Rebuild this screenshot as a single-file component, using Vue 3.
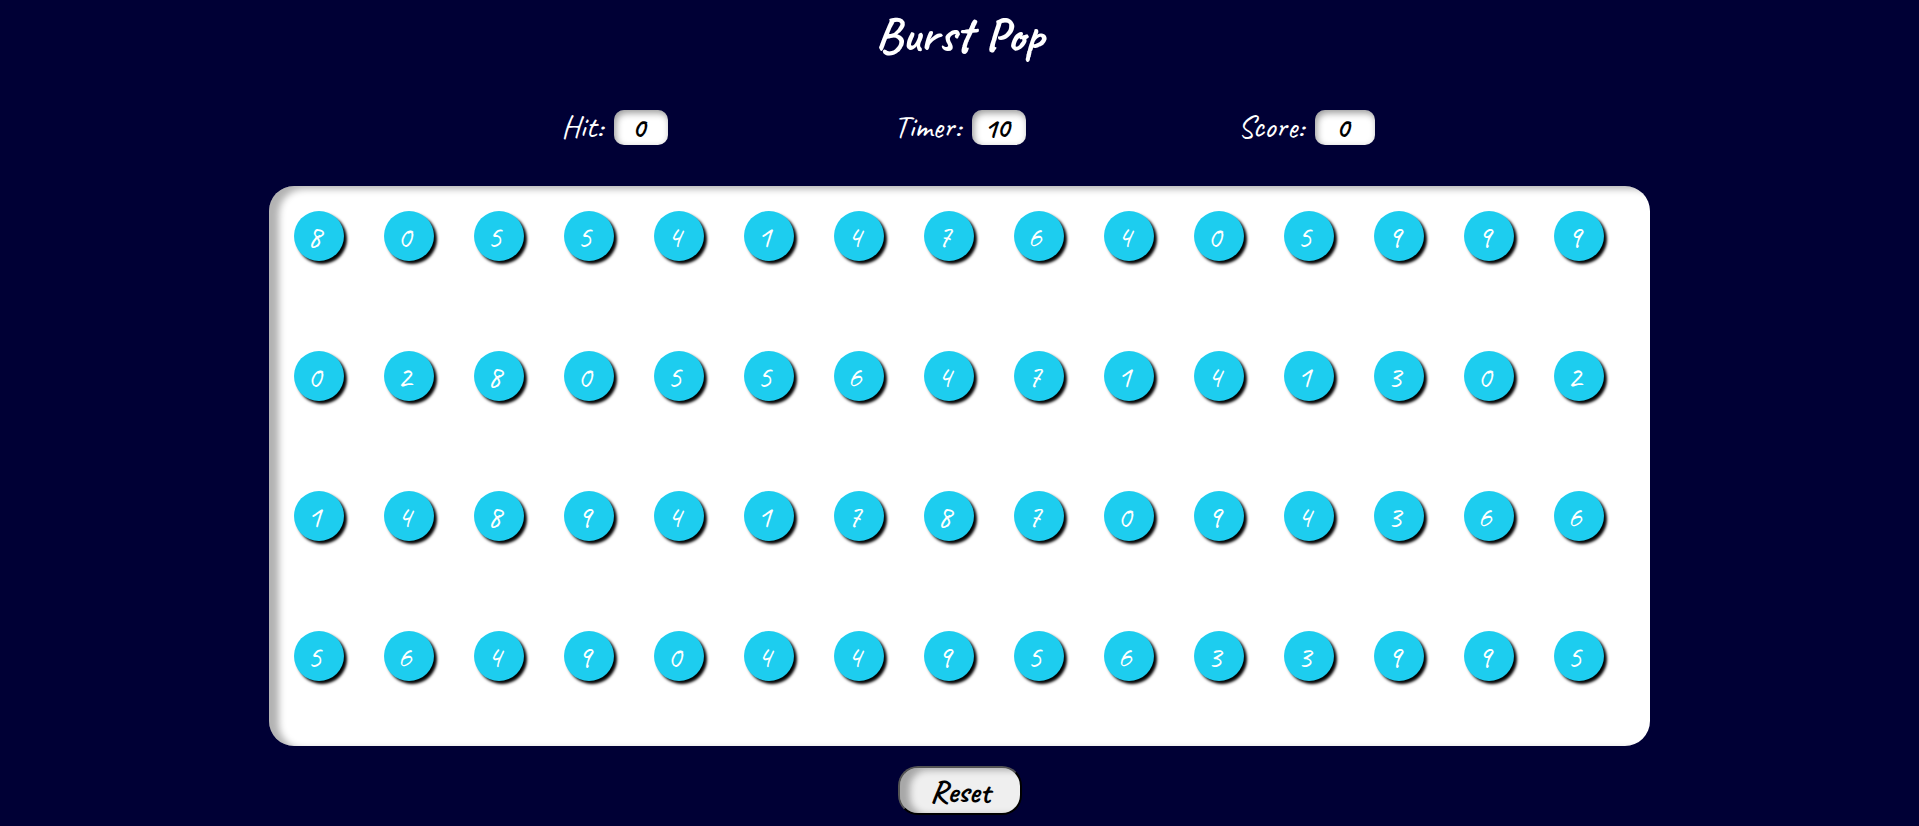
<script setup>
import { ref } from 'vue'

const stats = [
  { id: 'hit', label: 'Hit:', value: 0 },
  { id: 'timer', label: 'Timer:', value: 10 },
  { id: 'score', label: 'Score:', value: 0 }
]

const rows = ['805541476405999', '028055647141302', '148941787094366', '564904495633995']
const bubbles = ref(rows.join('').split(''))
</script>

<template>
  <main class="game">
    <h1 class="title">Burst Pop</h1>
    <div class="stats">
      <div v-for="s in stats" :key="s.id" class="stat" :class="s.id">
        <label :for="s.id">{{ s.label }}</label>
        <output :id="s.id" class="value">{{ s.value }}</output>
      </div>
    </div>
    <section class="board">
      <button v-for="(n, i) in bubbles" :key="i" type="button" class="bubble">{{ n }}</button>
    </section>
    <button type="button" class="reset">Reset</button>
  </main>
</template>

<style>
body {
  margin: 0;
  background: #000035;
}
</style>

<style scoped>
.game {
  display: flex;
  flex-direction: column;
  align-items: center;
  font-family: Caveat, "Liberation Sans Narrow", Lato, sans-serif;
  color: #fff;
}
.title {
  margin: 0;
  padding: 7px 0 0;
  font-size: 50px;
  line-height: 56px;
  font-weight: 700;
}
.stats {
  display: flex;
  justify-content: center;
  gap: 212px;
  margin-top: 47px;
  padding-left: 15px;
}
.stat {
  display: flex;
  align-items: flex-start;
  justify-content: flex-end;
  gap: 11px;
  font-size: 32px;
  line-height: 34px;
  font-weight: 500;
  white-space: nowrap;
}
.hit {
  width: 108px;
}
.timer {
  width: 146px;
}
.score {
  width: 137px;
}
.value {
  box-sizing: border-box;
  flex: none;
  width: 54px;
  height: 35px;
  padding-right: 4px;
  border-radius: 10px;
  background: #fff;
  box-shadow: inset 2px 3px 7px rgba(0, 0, 0, 0.4);
  color: #000;
  font-size: 28px;
  line-height: 35px;
  font-weight: 700;
  text-align: center;
}
.score .value {
  width: 60px;
}
.board {
  box-sizing: border-box;
  width: 72%;
  margin-top: 41px;
  padding: 25px 25px 65px;
  display: grid;
  grid-template-columns: repeat(auto-fill, 50px);
  gap: 90px 40px;
  border-radius: 25px;
  background: #fff;
  box-shadow: inset 10px 3px 7px rgba(0, 0, 0, 0.3);
}
.bubble {
  width: 50px;
  height: 50px;
  padding: 2px 9px 0 0;
  border: 0;
  border-radius: 50%;
  background: #1dcdef;
  box-shadow: 3px 3px 3px #000;
  color: #fff;
  font: inherit;
  font-size: 32px;
  line-height: 46px;
}
.reset {
  width: 124px;
  height: 49px;
  margin-top: 20px;
  padding: 2px 0 0 1px;
  border: 2px outset #000;
  border-radius: 20px;
  background: #efefef;
  box-shadow: inset 10px 2px 7px rgba(0, 0, 0, 0.3);
  color: #000;
  font: inherit;
  font-size: 32px;
  line-height: 40px;
  font-weight: 600;
}
</style>
